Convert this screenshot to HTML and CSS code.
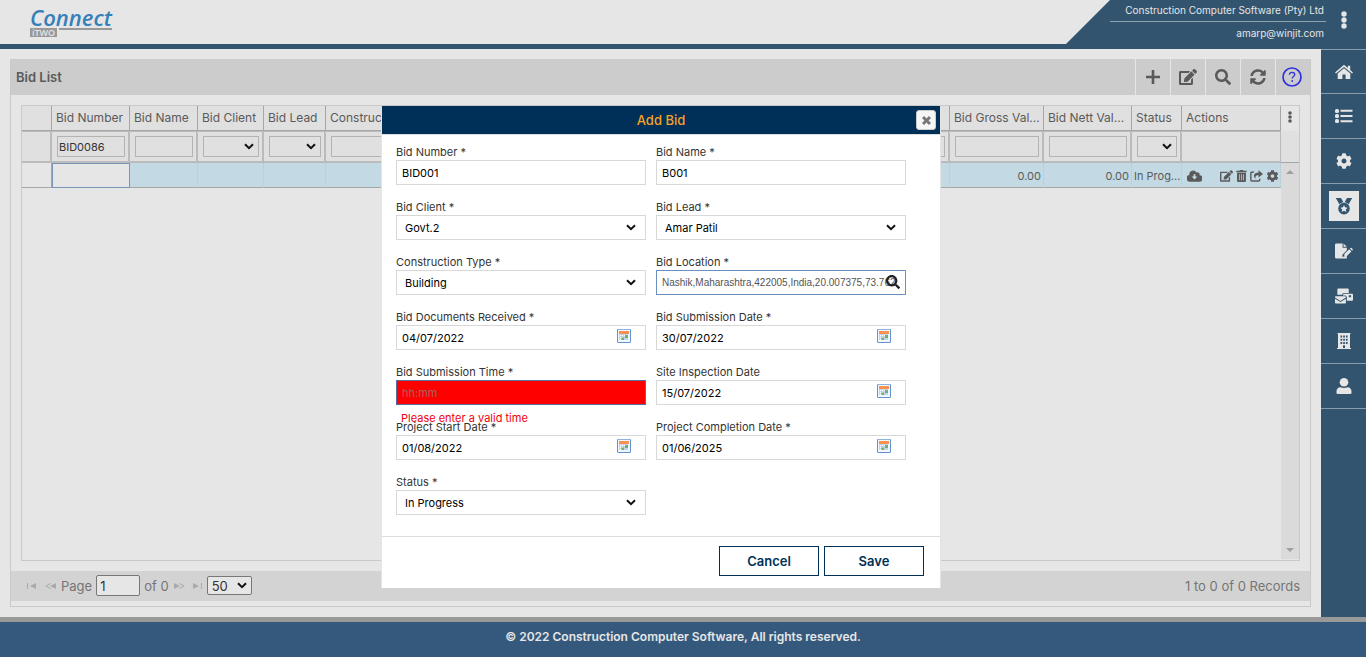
FILE: index.html
```html
<!DOCTYPE html>
<html lang="en">
<head>
<meta charset="utf-8">
<title>Bid List</title>
<link rel="stylesheet" href="styles.css">
</head>
<body>
<svg class="sprite" aria-hidden="true">
  <symbol id="i-plus" viewBox="0 0 16 16"><path d="M6.700 1h2.600v5.700H15v2.600H9.300V15H6.700V9.300H1V6.700h5.700z"/></symbol>
  <symbol id="i-edit" viewBox="0 0 576 512"><path d="M402.600 83.200l90.200 90.200c3.800 3.800 3.800 10 0 13.800L274.400 405.600l-92.800 10.300c-12.400 1.400-22.900-9.100-21.500-21.500l10.300-92.800L388.800 83.200c3.800-3.800 10-3.800 13.800 0zm162-22.900l-48.800-48.800c-15.200-15.200-39.900-15.200-55.200 0l-35.400 35.400c-3.800 3.800-3.800 10 0 13.800l90.200 90.200c3.800 3.800 10 3.800 13.800 0l35.400-35.400c15.200-15.300 15.200-40 0-55.200zM384 346.200V448H64V128h229.800c3.200 0 6.200-1.300 8.500-3.500l40-40c7.600-7.600 2.200-20.500-8.500-20.500H48C21.500 64 0 85.500 0 112v352c0 26.500 21.500 48 48 48h352c26.500 0 48-21.500 48-48V306.200c0-10.700-12.900-16-20.500-8.500l-40 40c-2.200 2.300-3.500 5.300-3.500 8.500z"/></symbol>
  <symbol id="i-search" viewBox="0 0 512 512"><path d="M505 442.700L405.300 343c-4.500-4.500-10.600-7-17-7H372c27.600-35.300 44-79.700 44-128C416 93.100 322.900 0 208 0S0 93.100 0 208s93.100 208 208 208c48.300 0 92.700-16.400 128-44v16.300c0 6.400 2.500 12.500 7 17l99.700 99.700c9.400 9.400 24.600 9.400 33.900 0l28.300-28.300c9.400-9.400 9.400-24.600.1-34zM208 336c-70.700 0-128-57.200-128-128 0-70.700 57.200-128 128-128 70.700 0 128 57.200 128 128 0 70.700-57.200 128-128 128z"/></symbol>
  <symbol id="i-sync" viewBox="0 0 512 512"><path d="M370.720 133.280C339.458 104.008 298.888 87.962 255.848 88c-77.458.068-144.328 53.178-162.791 126.850-1.344 5.363-6.122 9.150-11.651 9.150H24.103c-7.498 0-13.194-6.807-11.807-14.176C33.933 94.924 134.813 8 256 8c66.448 0 126.791 26.136 171.315 68.685L463.030 40.970C478.149 25.851 504 36.559 504 57.941V192c0 13.255-10.745 24-24 24H345.941c-21.382 0-32.090-25.851-16.971-40.971l41.750-41.749zM32 296h134.059c21.382 0 32.090 25.851 16.971 40.971l-41.750 41.750c31.262 29.273 71.835 45.319 114.876 45.280 77.418-.070 144.315-53.144 162.787-126.849 1.344-5.363 6.122-9.150 11.651-9.150h57.304c7.498 0 13.194 6.807 11.807 14.176C478.067 417.076 377.187 504 256 504c-66.448 0-126.791-26.136-171.315-68.685L48.970 471.030C33.851 486.149 8 475.441 8 454.059V320c0-13.255 10.745-24 24-24z"/></symbol>
  <symbol id="i-cog" viewBox="0 0 512 512"><path d="M487.400 315.700l-42.600-24.600c4.300-23.200 4.300-47 0-70.200l42.600-24.600c4.900-2.800 7.100-8.600 5.500-14-11.100-35.600-30-67.800-54.700-94.600-3.800-4.100-10-5.100-14.800-2.300L380.800 110c-17.900-15.400-38.500-27.300-60.800-35.100V25.800c0-5.600-3.900-10.500-9.400-11.700-36.700-8.200-74.300-7.800-109.200 0-5.500 1.200-9.400 6.100-9.400 11.700V75c-22.200 7.900-42.800 19.800-60.800 35.100L88.700 85.500c-4.900-2.800-11-1.900-14.800 2.300-24.700 26.700-43.600 58.900-54.700 94.600-1.700 5.400.6 11.200 5.500 14L67.300 221c-4.300 23.200-4.300 47 0 70.200l-42.600 24.600c-4.900 2.800-7.100 8.600-5.500 14 11.100 35.600 30 67.800 54.700 94.600 3.800 4.100 10 5.100 14.800 2.300l42.600-24.600c17.900 15.400 38.500 27.300 60.800 35.100v49.200c0 5.600 3.900 10.500 9.400 11.700 36.700 8.200 74.300 7.800 109.200 0 5.500-1.200 9.400-6.100 9.400-11.700v-49.200c22.200-7.900 42.800-19.800 60.800-35.100l42.600 24.600c4.900 2.800 11 1.900 14.800-2.300 24.700-26.700 43.600-58.900 54.700-94.600 1.500-5.500-.7-11.300-5.600-14.100zM256 336c-44.100 0-80-35.900-80-80s35.900-80 80-80 80 35.900 80 80-35.900 80-80 80z"/></symbol>
  <symbol id="i-help" viewBox="0 0 20 20"><circle cx="10" cy="10" r="9" fill="none" stroke="currentColor" stroke-width="1.700"/><path d="M7.400 7.700c0-1.400 1.100-2.300 2.700-2.300s2.600.9 2.600 2.200c0 1.800-2.500 2-2.500 4" fill="none" stroke="currentColor" stroke-width="1.300"/><circle cx="10.200" cy="14" r=".9"/></symbol>
  <symbol id="i-kebab" viewBox="0 0 6 18"><circle cx="3" cy="3" r="2.700"/><circle cx="3" cy="9" r="2.700"/><circle cx="3" cy="15" r="2.700"/></symbol>
  <symbol id="i-home" viewBox="0 0 18 16"><path d="M9 .8 12.800 4V1.800h2.400V6L18 8.400l-1 1.100L9 2.900 1 9.500 0 8.400z"/><path d="M9 4.200 15.300 9.400V15H10.600V10.600H7.400V15H2.700V9.400z"/></symbol>
  <symbol id="i-list" viewBox="0 0 18 16"><rect y="1" width="4" height="4" rx="1.500"/><rect y="6" width="4" height="4" rx="1.500"/><rect y="11" width="4" height="4" rx="1.500"/><path d="M5.500 1.800H17.500v2H5.500zM5.500 7H17.500v2H5.500zM5.500 12.200H17.500v2H5.500z"/></symbol>
  <symbol id="i-medal" viewBox="0 0 18 18"><path d="M.8 1h5.200l2.400 4.300C6.900 5.600 5.500 6.300 4.500 7.400zM17.200 1H12L9.600 5.300c1.500.3 2.900 1 3.900 2.100z"/><path fill-rule="evenodd" d="M9 5.800a5.800 5.800 0 1 0 0 11.600A5.800 5.800 0 0 0 9 5.800zm0 2.200 1.100 2.300 2.600.4-1.900 1.800.5 2.500L9 13.800 6.700 15l.5-2.500-1.900-1.800 2.600-.4z"/></symbol>
  <symbol id="i-sign" viewBox="0 0 19 16"><path d="M1.500 0H8v4.500h4.500v2.800L8 11.800l-.4 2.400 2.800-.3 2.100-2.100V16h-11A1.500 1.500 0 0 1 0 14.500v-13A1.500 1.500 0 0 1 1.500 0zM9 0l3.500 3.500H9z"/><path d="m15 6.200 2.300 2.300-4.800 4.800-2.900.6.500-2.900zM15.800 5.400l.9-.9c.4-.4 2.700 1.700 2.200 2.300l-.9.9z"/><path class="cut" d="M2 13.500c1-2.500 2-3.500 2.300-1.500.2 1.500.7 1.700 1.200.8.500 1 1.500 1.100 3 .9"/></symbol>
  <symbol id="i-mail" viewBox="0 0 19 16"><path d="M3.500 0h10a1 1 0 0 1 1 1v3.800H9.500a2 2 0 0 0-2 2H2.500V1a1 1 0 0 1 1-1z"/><path fill-rule="evenodd" d="M9.500 5.600H18a1 1 0 0 1 1 1V12a1 1 0 0 1-1 1h-5.500V9.500a2 2 0 0 0-2-2h-2v-1a1 1 0 0 1 1-.9zM14.500 7.200v2H17v-2z"/><path d="M.8 8.200h9.900a.8.800 0 0 1 .8.800v.6L5.800 13.200 0 9.600V9a.8.800 0 0 1 .8-.8z"/><path d="m0 10.800 5.800 3.500 5.700-3.500v4.400a.8.800 0 0 1-.8.800H.8a.8.800 0 0 1-.8-.8z"/></symbol>
  <symbol id="i-building" viewBox="0 0 16 16"><path fill-rule="evenodd" d="M1.500 0h13v1H14v14h1v1H1v-1h1V1h-.5zM4.500 2.500v2h1.700v-2zm2.700 0v2h1.700v-2zm2.700 0v2h1.700v-2zM4.500 5.700v2h1.700v-2zm2.700 0v2h1.700v-2zm2.700 0v2h1.700v-2zM4.500 8.900v2h1.700v-2zm2.700 0v2h1.700v-2zm2.700 0v2h1.700v-2zM7 12.300V15h2v-2.700z"/></symbol>
  <symbol id="i-user" viewBox="0 0 16 16"><circle cx="8" cy="4.300" r="4.300"/><path d="M4.500 9.200c2 1.100 5 1.100 7 0 2.500 0 4 1.800 4 4.300V15a1 1 0 0 1-1 1h-13a1 1 0 0 1-1-1v-1.500c0-2.500 1.500-4.300 4-4.300z"/></symbol>
  <symbol id="i-cloud" viewBox="0 0 16 12"><path fill-rule="evenodd" d="M13.400 5.100A2.400 2.400 0 0 0 10 2.300 4 4 0 0 0 2.500 4.800 3.600 3.600 0 0 0 3.600 12H12.800A3.200 3.200 0 0 0 13.400 5.100zM7 4h1.900v2.500h2L8 9.800 5 6.500h2z"/></symbol>
  <symbol id="i-trash" viewBox="0 0 12 14"><path d="M0 1h3.500L4.200 0h3.600l.7 1H12v1.500H0z"/><path fill-rule="evenodd" d="M.8 3.300h10.400V12.700A1.300 1.300 0 0 1 9.900 14H2.100A1.300 1.300 0 0 1 .8 12.700zM3.200 5v7h.8V5zm2.400 0v7h.8V5zm2.400 0v7h.8V5z"/></symbol>
  <symbol id="i-share" viewBox="0 0 16 14"><path d="M10.500 0 16 4.400 10.500 8.800V6.200C7 6.200 6.300 7.500 7 10.500 3.500 7.500 4 2.700 10.500 2.600z"/><path d="M5.500 1.500H2A1.800 1.800 0 0 0 .2 3.300v8.900A1.800 1.800 0 0 0 2 14h8.900a1.800 1.800 0 0 0 1.800-1.800V9.600L11 11v1.300H1.900V3.200H4z"/></symbol>
  <symbol id="i-close" viewBox="0 0 10 10"><path d="M0 2.300 2.300 0 5 2.700 7.700 0 10 2.300 7.300 5 10 7.700 7.700 10 5 7.300 2.300 10 0 7.700 2.700 5z"/></symbol>
  <symbol id="i-up" viewBox="0 0 8 4"><path d="M0 4 4 0l4 4z"/></symbol>
  <symbol id="i-down" viewBox="0 0 8 4"><path d="M0 0h8L4 4z"/></symbol>
  <symbol id="i-first" viewBox="0 0 10 6"><path d="M0 0h1v6H0zM9 0v6L3 3z"/></symbol>
  <symbol id="i-prev" viewBox="0 0 12 6"><path d="M11 0v6L5 3z"/><path d="M5.500.5.800 3l4.700 2.500" fill="none" stroke="currentColor"/></symbol>
  <symbol id="i-next" viewBox="0 0 12 6"><path d="M1 0v6l6-3z"/><path d="M6.500.5 11.200 3 6.500 5.500" fill="none" stroke="currentColor"/></symbol>
  <symbol id="i-last" viewBox="0 0 10 6"><path d="M8 0h1v6H8zM0 0v6l6-3z"/></symbol>
  <symbol id="i-cal" viewBox="0 0 14 14"><rect x=".5" y=".5" width="13" height="13" rx=".5" fill="#f3f7fd" stroke="#5f93d3"/><path d="M0 0h14v1H0z" fill="#8fb3e0"/><path d="M2 2h10v3H2z" fill="#f9924f"/><path d="M2 5h9v6H2z" fill="#c3d4ec"/><path d="M3 6h1v1H3zM5 6h1v1H5zM7 6h1v1H7zM3 8h1v1H3zM5 8h1v1H5zM3 10h1v1H3z" fill="#fff"/><path d="M8 6h3v3H8zM4.500 8.500h2.500v2.500H4.500z" fill="#6fb26f"/></symbol>
</svg>

<header class="topbar">
  <a class="logo" href="#" aria-label="Connect iTWO">
    <span class="logo-name">Connect</span>
    <span class="logo-sub"><span class="logo-badge">iTWO</span><span class="logo-rule"></span></span>
  </a>
  <div class="account">
    <div class="account-info">
      <span class="account-company">Construction Computer Software (Pty) Ltd</span>
      <span class="account-mail">amarp@winjit.com</span>
    </div>
    <button class="account-menu" type="button" aria-label="Account menu"><svg><use href="#i-kebab"/></svg></button>
  </div>
</header>

<div class="shell">
  <main class="content">
    <section class="panel">
      <div class="panel-head">
        <h1 class="panel-title">Bid List</h1>
        <div class="toolbar">
          <button type="button" aria-label="Add"><svg><use href="#i-plus"/></svg></button>
          <button type="button" aria-label="Edit"><svg class="wide"><use href="#i-edit"/></svg></button>
          <button type="button" aria-label="Search"><svg><use href="#i-search"/></svg></button>
          <button type="button" aria-label="Refresh"><svg><use href="#i-sync"/></svg></button>
          <button type="button" aria-label="Help" class="help"><svg><use href="#i-help"/></svg></button>
        </div>
      </div>

      <div class="grid-box">
        <div class="grid-main">
          <table class="grid">
            <colgroup>
              <col class="c-row"><col class="c-number"><col class="c-name"><col class="c-client"><col class="c-lead"><col class="c-type"><col><col class="c-gross"><col class="c-nett"><col class="c-status"><col class="c-actions">
            </colgroup>
            <thead>
              <tr class="heads"><th></th><th>Bid Number</th><th>Bid Name</th><th>Bid Client</th><th>Bid Lead</th><th>Construction Type</th><th></th><th>Bid Gross Val...</th><th>Bid Nett Val...</th><th>Status</th><th>Actions</th></tr>
              <tr class="filters">
                <td></td>
                <td><input type="text" value="BID0086" aria-label="Filter bid number"></td>
                <td><input type="text" aria-label="Filter bid name"></td>
                <td><select aria-label="Filter bid client"><option></option></select></td>
                <td><select aria-label="Filter bid lead"><option></option></select></td>
                <td><input type="text" aria-label="Filter construction type"></td>
                <td><input type="text" aria-label="Filter"></td>
                <td><input type="text" aria-label="Filter gross value"></td>
                <td><input type="text" aria-label="Filter nett value"></td>
                <td><select aria-label="Filter status"><option></option></select></td>
                <td></td>
              </tr>
            </thead>
            <tbody>
              <tr class="record">
                <td class="row-head"></td><td class="selected"></td><td></td><td></td><td></td><td></td><td></td><td class="num">0.00</td><td class="num">0.00</td><td>In Prog...</td>
                <td>
                  <div class="actions">
                    <button type="button" class="cloud" aria-label="Download"><svg><use href="#i-cloud"/></svg></button>
                    <button type="button" aria-label="Edit bid"><svg><use href="#i-edit"/></svg></button>
                    <button type="button" class="trash" aria-label="Delete bid"><svg><use href="#i-trash"/></svg></button>
                    <button type="button" aria-label="Share bid"><svg><use href="#i-share"/></svg></button>
                    <button type="button" aria-label="Bid settings"><svg><use href="#i-cog"/></svg></button>
                  </div>
                </td>
              </tr>
            </tbody>
          </table>
        </div>
        <div class="grid-side">
          <button type="button" class="grid-menu" aria-label="Column menu"><svg><use href="#i-kebab"/></svg></button>
          <div class="side-filter"></div>
          <div class="track"><svg><use href="#i-up"/></svg><svg><use href="#i-down"/></svg></div>
        </div>
      </div>

      <div class="pager">
        <div class="pager-nav">
          <button type="button" class="narrow" aria-label="First page"><svg><use href="#i-first"/></svg></button>
          <button type="button" class="tight" aria-label="Previous page"><svg><use href="#i-prev"/></svg></button>
          <label for="page">Page</label>
          <input id="page" type="text" value="1">
          <span>of 0</span>
          <button type="button" aria-label="Next page"><svg><use href="#i-next"/></svg></button>
          <button type="button" class="narrow tight" aria-label="Last page"><svg><use href="#i-last"/></svg></button>
          <select aria-label="Rows per page"><option>50</option></select>
        </div>
        <span>1 to 0 of 0 Records</span>
      </div>
    </section>

    <div class="overlay">
      <form class="modal" role="dialog" aria-labelledby="dlg-title">
        <div class="modal-head">
          <h2 id="dlg-title">Add Bid</h2>
          <button type="button" class="modal-close" aria-label="Close"><svg><use href="#i-close"/></svg></button>
        </div>
        <div class="fields">
          <div class="field"><label for="number">Bid Number *</label><input id="number" type="text" value="BID001"></div>
          <div class="field"><label for="name">Bid Name *</label><input id="name" type="text" value="B001"></div>
          <div class="field"><label for="client">Bid Client *</label><select id="client"><option>Govt.2</option></select></div>
          <div class="field"><label for="lead">Bid Lead *</label><select id="lead"><option>Amar Patil</option></select></div>
          <div class="field"><label for="type">Construction Type *</label><select id="type"><option>Building</option></select></div>
          <div class="field"><label for="location">Bid Location *</label><input id="location" class="location" type="text" value="Nashik,Maharashtra,422005,India,20.007375,73.7622"><button type="button" class="find" aria-label="Find location"><svg><use href="#i-search"/></svg></button></div>
          <div class="field"><label for="docs">Bid Documents Received *</label><input id="docs" type="text" value="04/07/2022"><button type="button" class="cal" aria-label="Choose date"><svg><use href="#i-cal"/></svg></button></div>
          <div class="field"><label for="subdate">Bid Submission Date *</label><input id="subdate" type="text" value="30/07/2022"><button type="button" class="cal" aria-label="Choose date"><svg><use href="#i-cal"/></svg></button></div>
          <div class="field"><label for="subtime">Bid Submission Time *</label><input id="subtime" class="invalid" type="text" placeholder="hh:mm" aria-describedby="time-error"><span class="error" id="time-error">Please enter a valid time</span></div>
          <div class="field"><label for="inspect">Site Inspection Date</label><input id="inspect" type="text" value="15/07/2022"><button type="button" class="cal" aria-label="Choose date"><svg><use href="#i-cal"/></svg></button></div>
          <div class="field"><label for="start">Project Start Date *</label><input id="start" type="text" value="01/08/2022"><button type="button" class="cal" aria-label="Choose date"><svg><use href="#i-cal"/></svg></button></div>
          <div class="field"><label for="end">Project Completion Date *</label><input id="end" type="text" value="01/06/2025"><button type="button" class="cal" aria-label="Choose date"><svg><use href="#i-cal"/></svg></button></div>
          <div class="field"><label for="status">Status *</label><select id="status"><option>In Progress</option></select></div>
        </div>
        <div class="modal-foot">
          <button type="button">Cancel</button>
          <button type="submit">Save</button>
        </div>
      </form>
    </div>
  </main>

  <nav class="sidebar" aria-label="Main">
    <a href="#" aria-label="Home"><svg><use href="#i-home"/></svg></a>
    <a href="#" aria-label="Lists"><svg><use href="#i-list"/></svg></a>
    <a href="#" aria-label="Settings"><svg class="small"><use href="#i-cog"/></svg></a>
    <a href="#" aria-label="Bids" aria-current="page"><span class="current"><svg><use href="#i-medal"/></svg></span></a>
    <a href="#" aria-label="Contracts"><svg><use href="#i-sign"/></svg></a>
    <a href="#" aria-label="Mail"><svg><use href="#i-mail"/></svg></a>
    <a href="#" aria-label="Company"><svg class="small"><use href="#i-building"/></svg></a>
    <a href="#" aria-label="Profile"><svg class="small"><use href="#i-user"/></svg></a>
  </nav>
</div>

<footer class="footer">© 2022 Construction Computer Software, All rights reserved.</footer>
</body>
</html>
```
FILE: styles.css
```css
:root {
  --blue: #33546e;
  --page: #e6e6e6;
  --line: #c9c9c9;
  --rule: #a6a6a6;
  --ink: #5a5a5a;
  --navy: #003057;
  --chevron: url("data:image/svg+xml,%3Csvg xmlns='http://www.w3.org/2000/svg' width='10' height='7'%3E%3Cpath d='M1 1.200 5 5.200 9 1.200' fill='none' stroke='%23111' stroke-width='2'/%3E%3C/svg%3E");
}

* { box-sizing: border-box; }

body {
  margin: 0;
  min-height: 100vh;
  display: flex;
  flex-direction: column;
  background: var(--page);
  color: var(--ink);
  font: 12px/16px Inter, "Open Sans", sans-serif;
}

button, input, select {
  font: inherit;
  color: inherit;
  margin: 0;
  padding: 0;
  border: 0;
  border-radius: 0;
  background: none;
}

select {
  appearance: none;
  background: var(--chevron) no-repeat right 4px center;
}

svg { display: block; fill: currentColor; }
.sprite { position: absolute; width: 0; height: 0; }
h1, h2 { margin: 0; }

/* Top bar */
.topbar {
  display: flex;
  justify-content: space-between;
  height: 49px;
  border-bottom: 5px solid var(--blue);
}

.logo { padding: 6px 0 0 30px; text-decoration: none; }

.logo-name {
  display: block;
  color: #3580b8;
  font: italic 600 22px/22px "Open Sans", sans-serif;
}

.logo-sub { display: flex; gap: 2px; }

.logo-badge {
  width: 27px;
  height: 9px;
  background: #999;
  color: #e6e6e6;
  font: 600 9px/9px "Open Sans", sans-serif;
  text-align: center;
}

.logo-rule { flex: 1; height: 2px; background: #999; }

.account {
  display: flex;
  width: 300px;
  padding-left: 44px;
  background: var(--blue);
  clip-path: polygon(44px 0, 100% 0, 100% 100%, 0 100%);
  color: #e6e6e6;
  font-size: 10px;
}

.account-info { flex: 1; text-align: right; }
.account-info span { display: block; padding-right: 2px; }
.account-company { line-height: 21px; border-bottom: 1px solid #8fa2b0; }
.account-mail { line-height: 22px; }
.account-menu { width: 40px; display: flex; justify-content: center; padding: 11px 4px 0 0; }
.account-menu svg { width: 6px; height: 18px; }

/* Page frame */
.shell { flex: 1; display: flex; }
.content { flex: 1; position: relative; display: flex; padding: 10px; min-width: 0; }

.panel {
  flex: 1;
  display: flex;
  flex-direction: column;
  min-width: 0;
  border: solid var(--line);
  border-width: 0 1px 1px;
  padding-bottom: 5px;
}

.panel-head {
  display: flex;
  justify-content: space-between;
  align-items: stretch;
  height: 36px;
  background: #ccc;
}

.panel-title { padding-left: 5px; font-size: 13px; line-height: 37px; font-weight: 600; }
.toolbar { display: flex; }

.toolbar button {
  width: 35px;
  display: flex;
  align-items: center;
  justify-content: center;
  border-left: 1px solid var(--page);
}

.toolbar svg { width: 16px; height: 16px; }
.toolbar .wide { width: 18px; }
.toolbar .help { padding-right: 2px; color: #3030e0; }
.toolbar .help svg { width: 20px; height: 20px; }

/* Grid */
.grid-box { flex: 1; display: flex; margin: 10px; border: 1px solid var(--line); }
.grid-main { flex: 1; min-width: 0; }
.grid { width: 100%; table-layout: fixed; border-collapse: separate; border-spacing: 0; }
.c-row { width: 30px; }
.c-number { width: 78px; }
.c-name { width: 68px; }
.c-client { width: 66px; }
.c-lead { width: 62px; }
.c-type { width: 120px; }
.c-gross { width: 94px; }
.c-nett { width: 88px; }
.c-status { width: 50px; }
.c-actions { width: 99px; }

.grid th, .grid td { padding: 0; white-space: nowrap; overflow: hidden; }

.heads th {
  height: 25px;
  padding-left: 4px;
  background: #e0e0e0;
  border: solid var(--rule);
  border-width: 0 1px 1px 0;
  font-weight: 400;
  text-align: left;
}

.filters td {
  height: 32px;
  padding: 0 3px 0 5px;
  background: #e0e0e0;
  border: solid #bbb;
  border-width: 1px 2px 2px 0;
}

.filters td:last-child { border-right-width: 1px; }

.filters input, .filters select {
  display: block;
  width: 100%;
  height: 21px;
  border: 1px solid #b3b3b3;
  color: #333;
}

.filters input { padding-left: 1px; font-size: 11px; }

.record td {
  height: 25px;
  padding: 1px 2px 0;
  background: #c3dae4;
  border: solid var(--rule);
  border-width: 0 0 1px;
  font-size: 11px;
}

.record td + td { border-right: 1px dotted #b5c5cd; }
.record .row-head { background: none; border-right: 1px solid var(--rule); }
.record .selected { background: var(--page); border: 1px solid #7b95b5; }
.record .num { text-align: right; }

.actions { display: flex; align-items: center; gap: 3px; padding-left: 3px; }
.actions svg { width: 13px; height: 12px; }
.actions .cloud { margin-right: 15px; }
.actions .cloud svg { width: 15px; }
.actions .trash svg { width: 11px; }

.grid-side { width: 18px; display: flex; flex-direction: column; }
.grid-menu { height: 25px; display: flex; justify-content: center; padding-top: 5px; }
.grid-menu svg { width: 4px; height: 12px; }
.side-filter { height: 32px; background: #e0e0e0; border-bottom: 1px solid var(--rule); }

.track {
  flex: 1;
  display: flex;
  flex-direction: column;
  justify-content: space-between;
  align-items: center;
  margin-bottom: 1px;
  padding: 7px 0;
  background: #dadada;
  color: #a0a0a0;
}

.track svg { width: 8px; height: 4px; }

/* Pager */
.pager {
  display: flex;
  justify-content: space-between;
  align-items: center;
  height: 30px;
  padding: 0 10px 1px 16px;
  background: #d3d3d3;
  color: #757575;
  font-size: 13px;
}

.pager-nav { display: flex; align-items: center; gap: 4px; }
.pager-nav button { margin-right: 4px; color: #aaa; }
.pager-nav .tight { margin-right: 0; }
.pager-nav svg { width: 12px; height: 6px; }
.pager-nav .narrow svg { width: 10px; }

.pager-nav input, .pager-nav select {
  border: 1px solid #777;
  border-radius: 2px;
  background-color: var(--page);
  color: #333;
}

.pager-nav input { width: 44px; height: 21px; padding-left: 3px; }
.pager-nav select { width: 45px; height: 19px; padding-left: 4px; }

/* Dialog */
.overlay {
  position: absolute;
  inset: 0;
  display: flex;
  justify-content: center;
  align-items: flex-start;
  padding: 57px 0 0 1px;
}

.modal {
  width: 560px;
  background: #fff;
  border: solid #e4e4e4;
  border-width: 0 1px;
  color: #333;
  font-size: 11px;
}

.modal-head {
  display: grid;
  grid-template-columns: 1fr auto 1fr;
  align-items: center;
  height: 29px;
  border-bottom: 1px solid #ddd;
  background: var(--navy);
  color: #f7a128;
}

.modal-head h2 { grid-column: 2; font-size: 13px; font-weight: 500; }

.modal-close {
  justify-self: end;
  display: flex;
  align-items: center;
  justify-content: center;
  width: 20px;
  height: 20px;
  margin-right: 4px;
  border: 1px solid #ccc;
  border-radius: 3px;
  background: #f6f6f6;
  color: #777;
}

.modal-close svg { width: 9px; height: 9px; }

.fields {
  display: grid;
  grid-template-columns: 1fr 1fr;
  gap: 15px 10px;
  padding: 10px 34px 21px 14px;
}

.field { position: relative; display: flex; flex-direction: column; }
.field label { line-height: 15px; }

.field input, .field select {
  width: 100%;
  height: 25px;
  padding: 0 5px;
  border: 1px solid #d8d8d8;
  color: #000;
}

.field select { padding-left: 8px; background-position: right 9px center; }
.field .location { padding-right: 10px; border-color: #6a8fc0; color: #555; font: 10px/14px "Liberation Sans", sans-serif; }
.field .invalid { background: #f00; border-color: #54709f; }
.field .invalid::placeholder { color: #a8605f; opacity: 1; }

.error { position: absolute; top: 40px; left: 5px; color: #f0000c; line-height: 26px; }
.find { position: absolute; right: 6px; bottom: 6px; color: #222; }
.find svg { width: 14px; height: 14px; }
.cal { position: absolute; right: 15px; bottom: 7px; }
.cal svg { width: 14px; height: 14px; }

.modal-foot {
  display: flex;
  justify-content: flex-end;
  gap: 5px;
  padding: 9px 16px 12px;
  border-top: 1px solid #ddd;
}

.modal-foot button {
  width: 100px;
  height: 30px;
  border: 1px solid var(--navy);
  color: var(--navy);
  font-size: 13px;
  font-weight: 600;
}

/* Sidebar */
.sidebar { width: 45px; background: var(--blue); color: #e6e6e6; }

.sidebar a {
  display: flex;
  align-items: center;
  justify-content: center;
  height: 45px;
  border-bottom: 1px solid #8b9dab;
  color: inherit;
}

.sidebar a:first-child { border-top: 1px solid #8b9dab; }
.sidebar svg { width: 18px; height: 16px; }
.sidebar .small { width: 16px; }
.sidebar .cut { fill: none; stroke: var(--blue); }
.sidebar .current { padding: 6px; background: var(--page); color: var(--blue); }
.sidebar .current svg { width: 18px; height: 18px; }

.footer {
  height: 40px;
  border-top: 5px solid #999;
  background: #35597d;
  color: #e6e6e6;
  font-weight: 600;
  line-height: 30px;
  text-align: center;
}
```
